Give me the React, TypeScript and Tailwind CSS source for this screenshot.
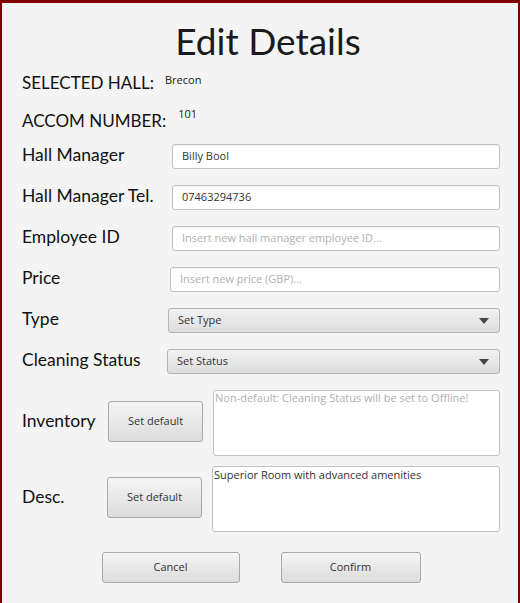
import React from 'react';

const labelFont = { fontFamily: 'Lato, "Open Sans", sans-serif' };
const fieldFont = { fontFamily: '"Open Sans", "Noto Sans", sans-serif' };

function TextInput({ value, placeholder }: { value?: string; placeholder?: string }) {
  return (
    <div
      className="flex h-[25px] flex-1 items-center rounded-[3px] border border-[#c2c2c2] bg-white pl-[9px] text-[11px] shadow-[inset_0_1px_1px_rgba(0,0,0,0.06)]"
      style={fieldFont}
    >
      {value ? (
        <span className="text-[#333]">{value}</span>
      ) : (
        <span className="text-[#b0b0b0]">{placeholder}</span>
      )}
    </div>
  );
}

function Combo({ text }: { text: string }) {
  return (
    <div
      className="flex h-[25px] flex-1 items-center justify-between rounded-[3px] border border-[#b4b4b4] bg-gradient-to-b from-[#f2f2f2] to-[#dddddd] pl-[9px] pr-[10px] text-[11px] text-[#333]"
      style={fieldFont}
    >
      <span>{text}</span>
      <svg width="10" height="6" viewBox="0 0 10 6">
        <path d="M0 0 L10 0 L5 6 Z" fill="#444" />
      </svg>
    </div>
  );
}

function Button({ children, className }: { children: React.ReactNode; className: string }) {
  return (
    <div
      className={`flex items-center justify-center rounded-[3px] border border-[#a9a9a9] bg-gradient-to-b from-[#f5f5f5] to-[#dcdcdc] text-[11px] text-[#333] ${className}`}
      style={fieldFont}
    >
      {children}
    </div>
  );
}

function Label({ children, className = '' }: { children: React.ReactNode; className?: string }) {
  return (
    <div className={`text-[17.5px] leading-[18px] text-[#111] ${className}`} style={labelFont}>
      {children}
    </div>
  );
}

export default function App() {
  return (
    <div className="h-[603px] w-[520px] border-l-2 border-r-2 border-t-[3px] border-[#800000] bg-[#f4f4f4]">
      <div className="flex flex-col pl-[20px] pr-[18px]">
        <h1
          className="mt-[19px] h-[37px] pl-[14px] text-center text-[37px] leading-[37px] text-[#1a1a1a]"
          style={labelFont}
        >
          Edit Details
        </h1>

        <div className="mt-[15px] flex items-start">
          <span className="text-[17px] leading-[17px] text-[#111]" style={labelFont}>
            SELECTED HALL:
          </span>
          <span className="ml-[11px] text-[11px] leading-[11px] text-[#222]" style={fieldFont}>
            Brecon
          </span>
        </div>

        <div className="mt-[17px] flex items-start">
          <span className="mt-[4px] text-[17px] leading-[17px] text-[#111]" style={labelFont}>
            ACCOM NUMBER:
          </span>
          <span className="ml-[12px] text-[11px] leading-[11px] text-[#222]" style={fieldFont}>
            101
          </span>
        </div>

        <div className="mt-[15px] flex h-[25px] items-start">
          <Label className="mt-[2px] w-[150px]">Hall Manager</Label>
          <TextInput value="Billy Bool" />
        </div>
        <div className="mt-[16px] flex h-[25px] items-start">
          <Label className="mt-[2px] w-[150px]">Hall Manager Tel.</Label>
          <TextInput value="07463294736" />
        </div>
        <div className="mt-[16px] flex h-[25px] items-start">
          <Label className="mt-[2px] w-[150px]">Employee ID</Label>
          <TextInput placeholder="Insert new hall manager employee ID..." />
        </div>
        <div className="mt-[16px] flex h-[25px] items-start">
          <Label className="mt-[2px] w-[148px]">Price</Label>
          <TextInput placeholder="Insert new price (GBP)..." />
        </div>
        <div className="mt-[16px] flex h-[25px] items-start">
          <Label className="mt-[2px] w-[146px]">Type</Label>
          <Combo text="Set Type" />
        </div>
        <div className="mt-[16px] flex h-[25px] items-start">
          <Label className="mt-[2px] w-[145px]">Cleaning Status</Label>
          <Combo text="Set Status" />
        </div>

        <div className="mt-[16px] flex h-[66px] items-start">
          <Label className="mt-[22px] w-[86px]">Inventory</Label>
          <Button className="mt-[11px] h-[41px] w-[95px]">Set default</Button>
          <div
            className="ml-[10px] h-[66px] flex-1 rounded-[3px] border border-[#c2c2c2] bg-white px-[1px] text-[11px] leading-[14px] text-[#b0b0b0]"
            style={fieldFont}
          >
            Non-default: Cleaning Status will be set to Offline!
          </div>
        </div>

        <div className="mt-[10px] flex h-[66px] items-start">
          <Label className="mt-[22px] w-[85px]">Desc.</Label>
          <Button className="mt-[11px] h-[41px] w-[95px]">Set default</Button>
          <div
            className="ml-[10px] h-[66px] flex-1 rounded-[3px] border border-[#c2c2c2] bg-white px-[1px] pt-[1px] text-[11px] leading-[14px] text-[#333]"
            style={fieldFont}
          >
            Superior Room with advanced amenities
          </div>
        </div>

        <div className="mt-[20px] flex justify-center gap-[41px]">
          <Button className="h-[31px] w-[138px]">Cancel</Button>
          <Button className="h-[31px] w-[140px]">Confirm</Button>
        </div>
      </div>
    </div>
  );
}
